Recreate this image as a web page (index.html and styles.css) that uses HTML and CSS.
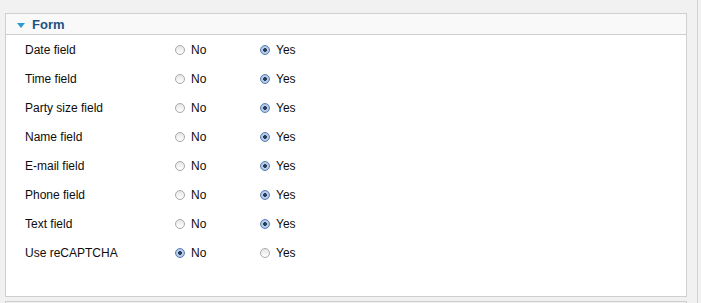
FILE: index.html
```html
<!DOCTYPE html>
<html>
<head>
<meta charset="utf-8">
<link rel="stylesheet" href="styles.css">
</head>
<body>
<div class="page">
  <div class="panel">
    <div class="panel-head">
      <span class="caret"></span>
      <span class="title">Form</span>
    </div>
    <div class="panel-body">
      <div class="row"><span class="label">Date field</span><label class="opt"><span class="radio"></span>No</label><label class="opt"><span class="radio on"></span>Yes</label></div>
      <div class="row"><span class="label">Time field</span><label class="opt"><span class="radio"></span>No</label><label class="opt"><span class="radio on"></span>Yes</label></div>
      <div class="row"><span class="label">Party size field</span><label class="opt"><span class="radio"></span>No</label><label class="opt"><span class="radio on"></span>Yes</label></div>
      <div class="row"><span class="label">Name field</span><label class="opt"><span class="radio"></span>No</label><label class="opt"><span class="radio on"></span>Yes</label></div>
      <div class="row"><span class="label">E-mail field</span><label class="opt"><span class="radio"></span>No</label><label class="opt"><span class="radio on"></span>Yes</label></div>
      <div class="row"><span class="label">Phone field</span><label class="opt"><span class="radio"></span>No</label><label class="opt"><span class="radio on"></span>Yes</label></div>
      <div class="row"><span class="label">Text field</span><label class="opt"><span class="radio"></span>No</label><label class="opt"><span class="radio on"></span>Yes</label></div>
      <div class="row"><span class="label">Use reCAPTCHA</span><label class="opt"><span class="radio on"></span>No</label><label class="opt"><span class="radio"></span>Yes</label></div>
    </div>
  </div>
  <div class="panel next"></div>
</div>
</body>
</html>
```
FILE: styles.css
```css
html, body {
  margin: 0;
  padding: 0;
  background: #f1f1f1;
  font-family: "Liberation Sans", Arial, sans-serif;
  font-size: 12px;
  color: #0d0d0d;
  overflow: hidden;
}
.page {
  width: 698px;
  height: 303px;
  padding: 13px 0 0 5px;
  box-sizing: border-box;
  border-right: 1px solid #d2d2d2;
}
.panel {
  width: 682px;
  box-sizing: border-box;
  border: 1px solid #cfcfcf;
  background: #fff;
}
.panel-head {
  height: 21px;
  box-sizing: border-box;
  background: #f9f9f9;
  border-bottom: 1px solid #cfcfcf;
  display: flex;
  align-items: center;
  padding-left: 11px;
}
.caret {
  width: 0;
  height: 0;
  border-left: 4px solid transparent;
  border-right: 4px solid transparent;
  border-top: 5px solid #2b9ad3;
  margin-right: 7px;
  margin-top: 2px;
}
.title {
  font-weight: bold;
  font-size: 13px;
  color: #1d5283;
}
.panel-body {
  padding: 0 0 28px 19px;
}
.row {
  height: 29.14px;
  display: flex;
  align-items: center;
}
.label {
  width: 150px;
}
.opt {
  width: 85px;
  display: flex;
  align-items: center;
}
.radio {
  width: 8px;
  height: 8px;
  border-radius: 50%;
  border: 1px solid #a8a8a8;
  background: linear-gradient(#e6e6e6, #ffffff);
  margin-right: 6px;
  box-sizing: content-box;
}
.radio.on {
  border-color: #5c7fb0;
  background: radial-gradient(circle, #2d3d55 0 1.6px, #bcd3ef 2.2px, #8fb2e0 100%);
}
.next {
  height: 4px;
  margin-top: 4px;
  background: #f1f1f1;
}
```
